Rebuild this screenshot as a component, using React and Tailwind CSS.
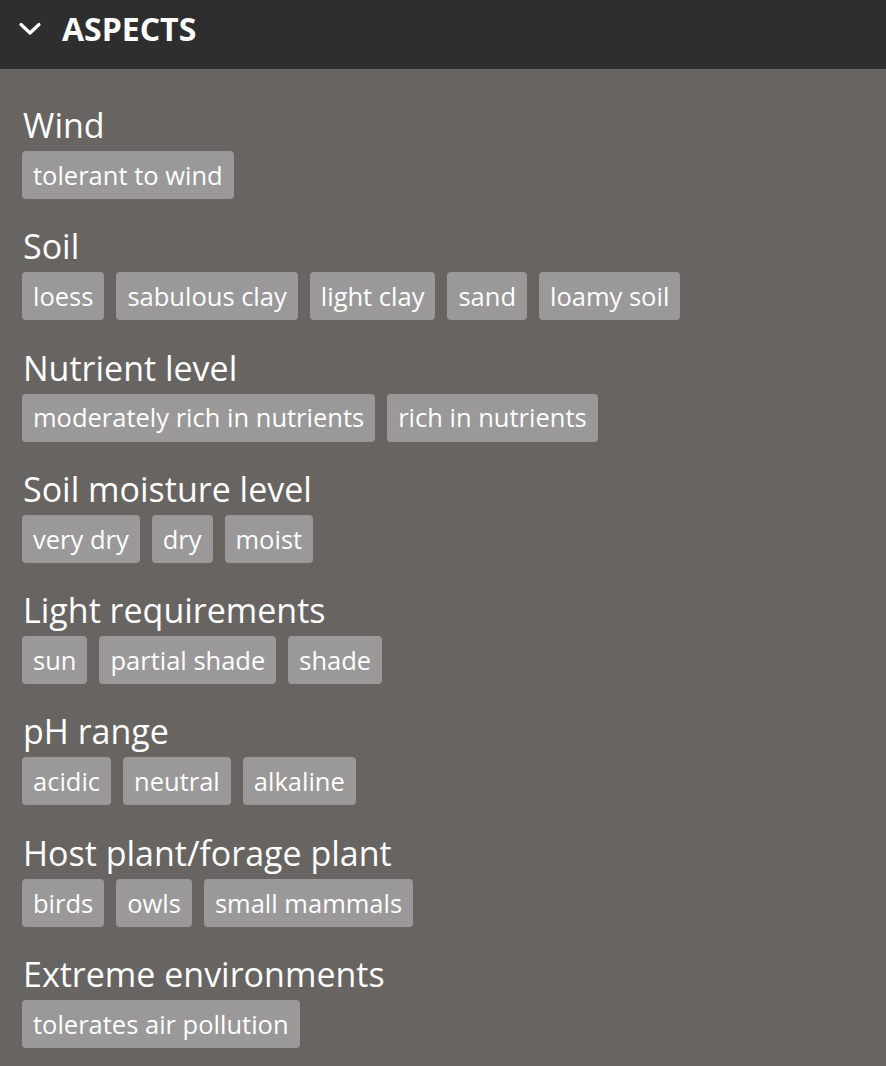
import React from 'react';

const ASPECTS = [
  { title: 'Wind', tags: ['tolerant to wind'] },
  { title: 'Soil', tags: ['loess', 'sabulous clay', 'light clay', 'sand', 'loamy soil'] },
  { title: 'Nutrient level', tags: ['moderately rich in nutrients', 'rich in nutrients'] },
  { title: 'Soil moisture level', tags: ['very dry', 'dry', 'moist'] },
  { title: 'Light requirements', tags: ['sun', 'partial shade', 'shade'] },
  { title: 'pH range', tags: ['acidic', 'neutral', 'alkaline'] },
  { title: 'Host plant/forage plant', tags: ['birds', 'owls', 'small mammals'] },
  { title: 'Extreme environments', tags: ['tolerates air pollution'] },
];

const Chevron = () => (
  <svg width="24" height="16" viewBox="0 0 24 16" fill="none">
    <path d="M3 3.5 L12 12 L21 3.5" stroke="white" strokeWidth="3.2" strokeLinecap="round" strokeLinejoin="round" />
  </svg>
);

const App = () => {
  return (
    <div className="w-[886px] min-h-[1066px] bg-[#686462] text-white" style={{ fontFamily: '"Open Sans", sans-serif' }}>
      {/* HEADER */}
      <div className="h-[69px] bg-[#2e2e2e] flex items-center pl-[18px] pb-[11px]">
        <Chevron />
        <span className="ml-[20px] text-[32px] font-bold leading-none">ASPECTS</span>
      </div>

      {/* SECTIONS */}
      <div className="px-[22px] pt-[36px] flex flex-col gap-[27.3px]">
        {ASPECTS.map((a) => (
          <div key={a.title} className="flex flex-col">
            <h2 className="h-[40px] leading-[40px] text-[34px] pl-[1px]">{a.title}</h2>
            <div className="flex gap-[12px] mt-[6px]">
              {a.tags.map((t) => (
                <span key={t} className="h-[48px] px-[11px] flex items-center rounded-[4px] bg-[#9a9898] text-[25.5px]">
                  {t}
                </span>
              ))}
            </div>
          </div>
        ))}
      </div>
    </div>
  );
};

export default App;
